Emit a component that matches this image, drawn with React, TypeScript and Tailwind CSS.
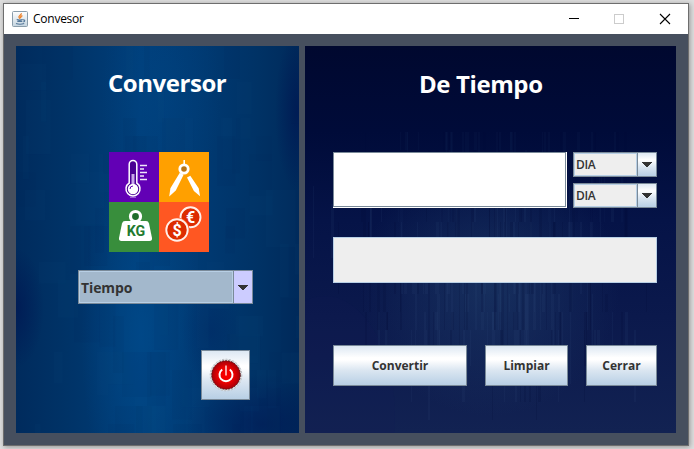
import React from 'react';

const uiFont = "font-['Open_Sans','Noto_Sans',sans-serif]";
const metal = 'border border-[#7a8a99] bg-[linear-gradient(180deg,#dde8f3_0%,#ffffff_30%,#ffffff_36%,#dbe6f1_62%,#b8cfe5_100%)]';

// Small deterministic generator so the streak texture is stable between renders.
function noise(seed: number) {
  const v = Math.sin(seed * 127.1) * 43758.5453;
  return v - Math.floor(v);
}

function LeftTexture() {
  const patches = Array.from({ length: 90 }, (_, i) => ({
    x: Math.floor(noise(i + 1) * 283),
    y: Math.floor(noise(i * 3.7 + 201) * 22) * 18,
    w: 5 + noise(i * 1.9 + 401) * 26,
    h: 18 + noise(i * 2.3 + 601) * 40,
    dark: noise(i * 5.1 + 801) > 0.5,
  }));
  return (
    <svg className="absolute inset-0" width="283" height="387" viewBox="0 0 283 387" aria-hidden="true">
      <defs>
        <linearGradient id="lb" x1="0" x2="1" y1="0" y2="0">
          <stop offset="0" stopColor="#002b5d" />
          <stop offset=".18" stopColor="#003367" />
          <stop offset=".44" stopColor="#003f7b" />
          <stop offset=".64" stopColor="#003a73" />
          <stop offset=".86" stopColor="#003265" />
          <stop offset="1" stopColor="#002a5b" />
        </linearGradient>
        <radialGradient id="glow">
          <stop offset="0" stopColor="#004b8c" stopOpacity=".7" />
          <stop offset="1" stopColor="#004b8c" stopOpacity="0" />
        </radialGradient>
        <radialGradient id="shade">
          <stop offset="0" stopColor="#00104f" stopOpacity=".55" />
          <stop offset="1" stopColor="#00104f" stopOpacity="0" />
        </radialGradient>
      </defs>
      <rect width="283" height="387" fill="url(#lb)" />
      <ellipse cx="125" cy="290" rx="60" ry="180" fill="url(#glow)" />
      <ellipse cx="145" cy="50" rx="60" ry="120" fill="url(#glow)" opacity=".4" />
      <ellipse cx="0" cy="262" rx="28" ry="60" fill="url(#shade)" />
      <ellipse cx="281" cy="65" rx="22" ry="80" fill="url(#shade)" />
      <ellipse cx="245" cy="378" rx="75" ry="50" fill="url(#shade)" />
      <ellipse cx="195" cy="285" rx="30" ry="55" fill="url(#shade)" opacity=".4" />
      {patches.map((p, i) => (
        <rect key={i} x={p.x} y={p.y} width={p.w} height={p.h} fill={p.dark ? '#001a4d' : '#0a5390'} opacity=".06" />
      ))}
    </svg>
  );
}

function RightTexture() {
  const streaks = Array.from({ length: 300 }, (_, i) => {
    const spread = (noise(i + 11) + noise(i * 2.1 + 311) + noise(i * 3.3 + 611)) / 3;
    return {
      x: Math.floor((spread - 0.5) * 440 + 188),
      y: 86 + Math.floor(noise(i * 1.7 + 911) * 13) * 18,
      w: 1 + Math.floor(noise(i * 2.9 + 1211) * 3),
      h: 18 + Math.floor(noise(i * 4.3 + 1511) * 4) * 18,
      light: noise(i * 5.7 + 1811) > 0.45,
    };
  });
  return (
    <svg className="absolute inset-0" width="371" height="387" viewBox="0 0 371 387" aria-hidden="true">
      <defs>
        <linearGradient id="rb" x1="0" x2="0" y1="0" y2="1">
          <stop offset="0" stopColor="#00082f" />
          <stop offset=".22" stopColor="#000b39" />
          <stop offset=".45" stopColor="#051347" />
          <stop offset=".7" stopColor="#0b194c" />
          <stop offset="1" stopColor="#122252" />
        </linearGradient>
        <radialGradient id="haze">
          <stop offset="0" stopColor="#1e3c68" stopOpacity=".65" />
          <stop offset="1" stopColor="#1e3c68" stopOpacity="0" />
        </radialGradient>
      </defs>
      <rect width="371" height="387" fill="url(#rb)" />
      <ellipse cx="185" cy="240" rx="130" ry="130" fill="url(#haze)" />
      <ellipse cx="20" cy="370" rx="70" ry="120" fill="#151d5a" opacity=".15" />
      {streaks.map((s, i) => (
        <rect key={i} x={s.x} y={s.y} width={s.w} height={s.h} fill={s.light ? '#3b5c8c' : '#00072f'} opacity={s.y < 130 ? 0.06 : s.light ? 0.1 : 0.14} />
      ))}
    </svg>
  );
}

function JavaIcon() {
  return (
    <svg width="16" height="16" viewBox="0 0 16 16" aria-hidden="true">
      <defs>
        <linearGradient id="jv" x1="0" x2="0" y1="0" y2="1">
          <stop offset="0" stopColor="#ffffff" />
          <stop offset="1" stopColor="#c4d4df" />
        </linearGradient>
      </defs>
      <rect x=".5" y=".5" width="15" height="15" rx="1" fill="url(#jv)" stroke="#8a9dab" />
      <path d="M9.3 2.2c.6 1.7-3.5 2.5-2.2 4.3l.8 1.2M10.4 4.7C8.4 5.6 8.3 6 9 7.2" fill="none" stroke="#ee7d20" strokeWidth="1.3" />
      <path d="M4.7 8.6c1.5.5 4.4.5 6 0M5.3 10.4h5M11 9c2.2-.6 2.4 1.3.3 2M4 12.5c2 .8 6 .8 8.2 0" fill="none" stroke="#55789a" strokeWidth="1.1" />
    </svg>
  );
}

function UnitsImage() {
  return (
    <svg width="100" height="100" viewBox="0 0 100 100" className="block" aria-hidden="true">
      <rect width="50" height="50" fill="#6200b5" />
      <rect x="50" width="50" height="50" fill="#ffa000" />
      <rect y="50" width="50" height="50" fill="#388e3c" />
      <rect x="50" y="50" width="50" height="50" fill="#ff5722" />
      {/* thermometer */}
      <path d="M20.2 31V12.2a3.8 3.8 0 0 1 7.6 0V31a7 7 0 1 1-7.6 0z" fill="#4a0093" stroke="#fff" strokeWidth="1.5" />
      <path d="M22.5 22h3v11h-3z" fill="#c9a8ea" />
      <circle cx="24" cy="37" r="5.2" fill="#fff" />
      <path d="M21 37a3 3 0 0 1 3-3" fill="none" stroke="#6200b5" strokeWidth="1" />
      <path d="M21 45.2h6" stroke="#c9a8ea" strokeWidth=".8" />
      <path d="M31 13.500h7M31 17h4M31 20.500h7M31 24h4M31 27.500h7" stroke="#f0e6fa" strokeWidth="1.300" />
      {/* compass */}
      <path d="M75.200 8v5" stroke="#fff" strokeWidth="1.600" />
      <circle cx="75" cy="17" r="4.200" fill="#b87516" stroke="#fff" strokeWidth="2.800" />
      <path d="M70.800 20.700l3.800 2L66.800 38.500l-6.600 6 1.200-8.200zM78 25.500l3.300-1.700 8.400 12.500 1.400 8-6.200-5.200z" fill="#fff" />
      {/* weight */}
      <circle cx="26.500" cy="64.500" r="5" fill="#1f6e2b" stroke="#fff" strokeWidth="3.200" />
      <path d="M16 69h21q2.400 0 3 2.400l3 14.600q.4 3-2.600 3H12.600q-3 0-2.600-3l3-14.600Q13.600 69 16 69z" fill="#fff" />
      <text x="27" y="83.500" textAnchor="middle" textLength="18.500" lengthAdjust="spacingAndGlyphs" fontFamily="Roboto, sans-serif" fontWeight="700" fontSize="14.500" fill="#237a30">KG</text>
      {/* coins */}
      <circle cx="81.500" cy="65.300" r="10" fill="#dd2c00" stroke="#fff0ea" strokeWidth="1.900" />
      <text x="81.500" y="71" textAnchor="middle" fontFamily="Roboto, sans-serif" fontWeight="700" fontSize="16" fill="#fff">€</text>
      <circle cx="68" cy="78" r="12.500" fill="#ff5722" />
      <circle cx="68" cy="78" r="10.700" fill="#dd2c00" stroke="#fff0ea" strokeWidth="1.900" />
      <text x="68" y="83.800" textAnchor="middle" fontFamily="Roboto, sans-serif" fontWeight="700" fontSize="16" fill="#fff">$</text>
    </svg>
  );
}

function PowerIcon() {
  return (
    <svg width="34" height="34" viewBox="0 0 34 34" aria-hidden="true">
      <defs>
        <radialGradient id="pw">
          <stop offset="0" stopColor="#fa0000" />
          <stop offset=".55" stopColor="#ea0000" />
          <stop offset="1" stopColor="#a50008" />
        </radialGradient>
      </defs>
      <circle cx="17" cy="17" r="15.800" fill="#e3e3e5" stroke="#b9bec2" strokeWidth="1" strokeDasharray="2 1.500" />
      <circle cx="17" cy="17" r="14.300" fill="url(#pw)" stroke="#54191c" strokeWidth="1" strokeDasharray="2 1" />
      <path d="M13.200 11.500a6.500 6.500 0 1 0 7.600 0" fill="none" stroke="#fff" strokeWidth="2" />
      <path d="M17 7.500v10" stroke="#fff" strokeWidth="1.300" />
    </svg>
  );
}

function Arrow() {
  return (
    <svg width="10" height="5" viewBox="0 0 10 5" shapeRendering="crispEdges" aria-hidden="true">
      <path d="M0 0h10v1h-1v1h-1v1h-1v1h-1v1h-2v-1h-1v-1h-1v-1h-1v-1h-1z" fill="#333" />
    </svg>
  );
}

function UnitSelect() {
  return (
    <div className="flex h-[25px] w-[84px] border border-[#7a8a99]">
      <div className="flex flex-1 items-center border border-[#b8cfe5] bg-[#eeeeee] pl-px text-[12px] font-semibold text-[#333]">
        <span className="tracking-[-0.4px]">DIA</span>
      </div>
      <div className="flex w-[19px] items-center justify-center border-l border-[#7a8a99] bg-[linear-gradient(180deg,#dde8f3_0%,#ffffff_30%,#dbe6f1_60%,#b8cfe5_100%)]">
        <Arrow />
      </div>
    </div>
  );
}

function MetalButton({ label, size }: { label: string; size: string }) {
  return (
    <button className={`${metal} ${size} flex h-[41px] items-center justify-center text-[12px] font-bold text-[#333]`}>
      {label}
    </button>
  );
}

export default function App() {
  return (
    <div className={`h-[449px] w-[694px] overflow-hidden bg-[#dedede] pl-[3px] pt-[3px] ${uiFont}`}>
      <div className="flex h-[443px] w-[686px] flex-col border border-[#6e6e6e] bg-[#464f5e] shadow-[1px_1px_5px_#00000055]">
        <header className="flex h-[30px] shrink-0 items-center bg-white pl-2">
          <JavaIcon />
          <span className="ml-[5px] text-[12px] tracking-[-0.25px] text-black">Convesor</span>
          <svg className="ml-auto mr-[17px]" width="104" height="12" viewBox="0 0 104 12" aria-hidden="true">
            <path d="M2 5.500h10" stroke="#000" />
            <rect x="47.500" y="1.500" width="9" height="9" fill="none" stroke="#ccc" />
            <path d="M93 1l10 10M103 1L93 11" stroke="#000" strokeWidth="1.100" />
          </svg>
        </header>
        <main className="flex flex-1 gap-1.5 p-3">
          <section className="relative h-[387px] w-[283px]">
            <LeftTexture />
            <div className="relative flex h-full flex-col">
              <h1 className="ml-[92px] mt-[20px] h-[34px] whitespace-nowrap text-[24px] font-bold leading-[34px] tracking-[-0.45px] text-white">Conversor</h1>
              <div className="ml-[93px] mt-[52px]">
                <UnitsImage />
              </div>
              <div className="ml-[62px] mt-[18px] flex h-[34px] w-[175px] border border-[#7a8a99]">
                <div className="flex flex-1 items-center border border-[#b8cfe5] bg-[#a3b8cc] pl-px text-[14px] font-bold tracking-[-0.1px] text-[#333]">Tiempo</div>
                <div className="flex w-[19px] items-center justify-center border-l border-[#7a8a99] bg-[#ccccff]">
                  <Arrow />
                </div>
              </div>
              <button className={`${metal} ml-[185px] mt-[46px] flex h-[50px] w-[49px] items-center justify-center`} aria-label="Power">
                <PowerIcon />
              </button>
            </div>
          </section>
          <section className="relative h-[387px] w-[371px]">
            <RightTexture />
            <div className="relative flex h-full w-[352px] flex-col pl-7">
              <h2 className="ml-[86px] mt-[21px] h-[34px] whitespace-nowrap text-[24px] font-bold leading-[34px] tracking-[-0.4px] text-white">De Tiempo</h2>
              <div className="mt-[51px] flex gap-1.5">
                <div className="h-[56px] w-[234px] border-b border-r border-white">
                  <div className="h-[55px] w-[233px] border border-[#7a8a99] bg-white" />
                </div>
                <div className="flex flex-col gap-1.5">
                  <UnitSelect />
                  <UnitSelect />
                </div>
              </div>
              <div className="mt-[29px] h-[46px] w-[324px] border border-[#b8cfe5] bg-[#eeeeee]" />
              <div className="mt-[62px] flex w-[324px] justify-between">
                <MetalButton label="Convertir" size="w-[134px]" />
                <MetalButton label="Limpiar" size="w-[83px]" />
                <MetalButton label="Cerrar" size="w-[71px]" />
              </div>
            </div>
          </section>
        </main>
      </div>
    </div>
  );
}
